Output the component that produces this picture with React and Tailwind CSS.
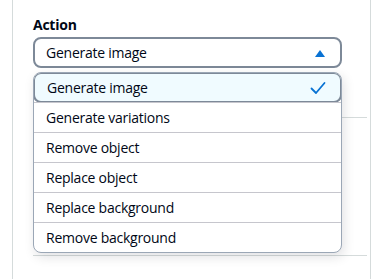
import { useState } from "react";

const options = [
  "Generate image",
  "Generate variations",
  "Remove object",
  "Replace object",
  "Replace background",
  "Remove background",
];

export default function App() {
  const [selected, setSelected] = useState("Generate image");

  return (
    <div
      className="relative h-[279px] w-[373px] overflow-hidden bg-white text-[14px] tracking-[-0.25px] text-[#000716]"
      style={{ fontFamily: '"Open Sans", "Noto Sans", sans-serif' }}
    >
      <div className="ml-[12px] h-full w-[359px] border-x border-[#d5dbdb] pl-[20px] pr-[3px] pt-[15px]">
        <div className="text-[14px] font-bold leading-[20px]">Action</div>
        <button className="mt-[2px] flex h-[31px] w-[309px] items-center justify-between rounded-[8px] border-2 border-[#7d8998] pl-[11px] pr-[14px] text-left leading-[20px]">
          <span>{selected}</span>
          <svg width="12" height="10" viewBox="0 0 12 10">
            <path d="M1 9 L6 2 L11 9 Z" fill="#0972d3" />
          </svg>
        </button>
        <div className="mt-[49px] h-px w-full bg-[#d5dbdb]" />
        <div className="mt-[137px] h-px w-full bg-[#d5dbdb]" />
      </div>

      <ul className="absolute left-[33px] top-[72px] w-[309px] overflow-hidden rounded-[8px] border border-[#9ba7b6] bg-white shadow-[2px_4px_12px_rgba(0,7,22,0.12)]">
        {options.map((o, i) => {
          const active = o === selected;
          return (
            <li
              key={o}
              onClick={() => setSelected(o)}
              className={
                active
                  ? "-m-px flex h-[31px] items-center justify-between rounded-[8px] border-2 border-[#7d8998] bg-[#f0fbff] pl-[12px] pr-[14px] leading-[20px]"
                  : "flex h-[30px] items-center border-t border-[#c6c6cd] pl-[12px] leading-[20px] first:border-t-0"
              }
            >
              <span>{o}</span>
              {active && (
                <svg width="16" height="14" viewBox="0 0 16 14">
                  <path d="M1.5 7.5 L6 12 L14.5 2" fill="none" stroke="#0972d3" strokeWidth="1.8" strokeLinecap="round" strokeLinejoin="round" />
                </svg>
              )}
            </li>
          );
        })}
      </ul>
    </div>
  );
}
